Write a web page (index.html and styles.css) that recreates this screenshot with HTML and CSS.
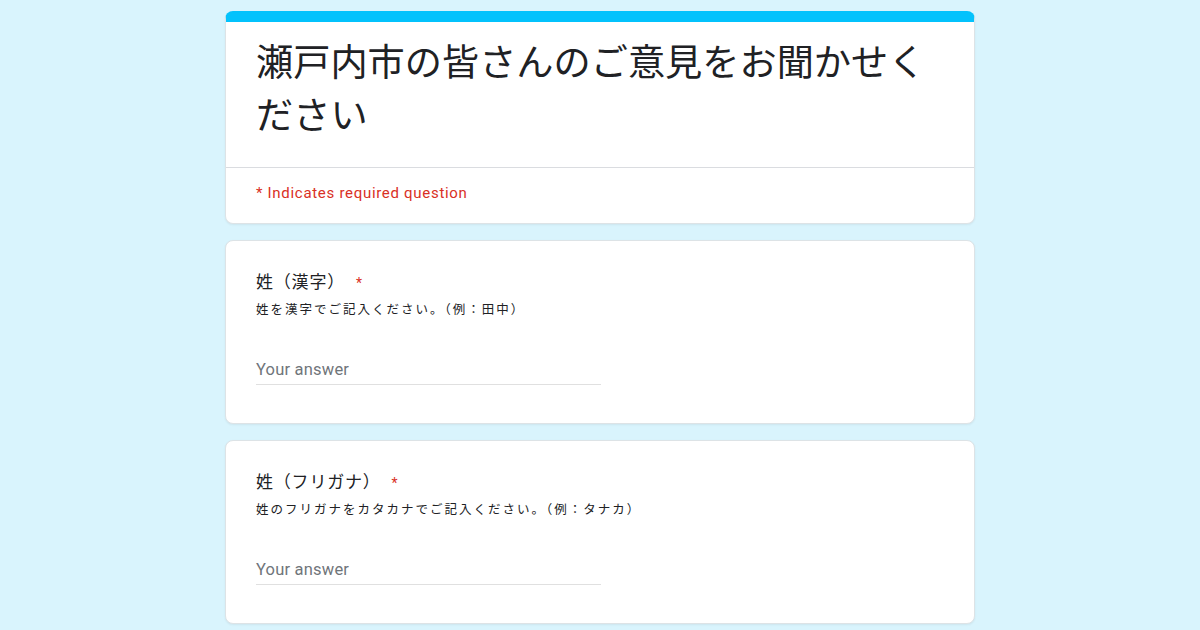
FILE: index.html
```html
<!DOCTYPE html>
<html lang="ja">
<head>
<meta charset="utf-8">
<title>瀬戸内市の皆さんのご意見をお聞かせください</title>
<link rel="stylesheet" href="styles.css">
</head>
<body>
<main class="form">
  <section class="card header-card">
    <div class="header-main">
      <h1 class="form-title">瀬戸内市の皆さんのご意見をお聞かせください</h1>
    </div>
    <div class="header-note">* Indicates required question</div>
  </section>

  <section class="card question">
    <div class="q-title">姓（漢字）<span class="req">*</span></div>
    <div class="q-desc">姓を漢字でご記入ください。（例：田中）</div>
    <div class="answer">Your answer</div>
  </section>

  <section class="card question">
    <div class="q-title">姓（フリガナ）<span class="req">*</span></div>
    <div class="q-desc">姓のフリガナをカタカナでご記入ください。（例：タナカ）</div>
    <div class="answer">Your answer</div>
  </section>
</main>
</body>
</html>
```

FILE: styles.css
```css
html, body {
  margin: 0;
  padding: 0;
}
body {
  background: #d9f4fd;
  font-family: Roboto, "Noto Sans CJK JP", "Noto Sans", sans-serif;
  color: #202124;
  height: 630px;
  overflow: hidden;
}
.form {
  width: 750px;
  margin: 11px auto 0;
  display: flex;
  flex-direction: column;
  gap: 16px;
}
.card {
  background: #fff;
  border: 1px solid #dde3e6;
  border-radius: 8px;
  box-sizing: border-box;
  box-shadow: 0 1px 2px rgba(60, 64, 67, 0.08);
}
.header-card {
  border-top: 11px solid #03c2fc;
}
.header-main {
  padding: 12px 30px 27px 30px;
  border-bottom: 1px solid #dadce0;
}
.form-title {
  margin: 0;
  font-family: "Noto Sans CJK JP", sans-serif;
  font-weight: 400;
  font-size: 37.2px;
  line-height: 53px;
  color: #202124;
}
.header-note {
  padding: 15px 30px 20px 30px;
  font-family: Roboto, sans-serif;
  font-size: 15px;
  letter-spacing: 0.7px;
  line-height: 20px;
  color: #d93025;
}
.question {
  padding: 28px 30px 38px 30px;
}
.q-title {
  font-family: "Noto Sans CJK JP", sans-serif;
  font-size: 17px;
  letter-spacing: 0.8px;
  line-height: 24px;
  color: #202124;
}
.req {
  font-family: Roboto, sans-serif;
  font-size: 14px;
  line-height: 1;
  color: #d93025;
  margin-left: 11px;
}
.q-desc {
  margin-top: 6px;
  font-family: "Noto Sans CJK JP", sans-serif;
  font-size: 12.5px;
  letter-spacing: 2px;
  line-height: 20px;
  color: #202124;
}
.answer {
  margin-top: 41px;
  width: 345px;
  padding-bottom: 4px;
  border-bottom: 1px solid #e0e0e0;
  font-family: Roboto, sans-serif;
  font-size: 16.5px;
  letter-spacing: 0.2px;
  line-height: 20px;
  color: #70757a;
}
```
